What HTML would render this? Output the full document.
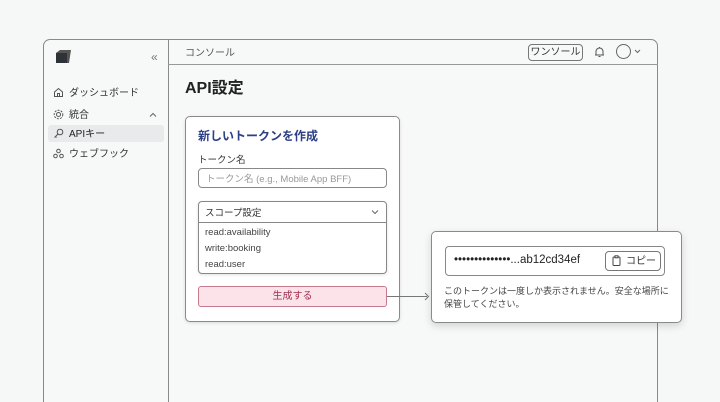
<!DOCTYPE html>
<html style="width:720px;height:402px;overflow:hidden"><head><meta charset="utf-8"><style>
*{box-sizing:border-box;margin:0;padding:0}
body{width:720px;height:402px;background:#f6f7f7;font-family:"Liberation Sans","Noto Sans CJK JP",sans-serif;color:#333;position:relative;overflow:hidden}
.a{position:absolute;line-height:1}
.frame{left:43px;top:39px;width:615px;height:363px;border:1px solid #8a8a8a;border-bottom:none;border-radius:7px 7px 0 0;background:#f7f8f8}
.sb{left:168px;top:39px;width:1px;height:363px;background:#8a8a8a}
.hd{left:168px;top:64px;width:490px;height:1px;background:#999}
.nav{font-size:10px;color:#333}
.card{left:185px;top:116px;width:215px;height:206px;border:1px solid #8a8a8a;border-radius:5px;background:#fff;box-shadow:0 1px 3px rgba(0,0,0,.12)}
.pop{left:431px;top:231px;width:251px;height:92px;border:1px solid #8a8a8a;border-radius:5px;background:#fff;box-shadow:0 3px 8px rgba(0,0,0,.15)}
</style></head><body>
<div class="a frame"></div>
<div class="a sb"></div>
<div class="a hd"></div>
<svg class="a" style="left:54px;top:49px" width="18" height="16" viewBox="0 0 18 16"><path d="M2 4 L6 1 L17 1 L15 14 L2 14 Z" fill="#555"/><path d="M2 4 L13 4 L13 14 L2 14Z" fill="#2e3338"/></svg>
<div class="a" style="left:151px;top:51px;font-size:12px;color:#777">«</div>
<svg class="a" style="left:53px;top:87px" width="11" height="11" viewBox="0 0 11 11" fill="none" stroke="#555" stroke-width="1"><path d="M1.5 5 L5.5 1.5 L9.5 5 V9.5 H1.5Z M4.5 9.5 V6.5 H6.5 V9.5"/></svg>
<div class="a nav" style="left:69px;top:89px">ダッシュボード</div>
<svg class="a" style="left:53px;top:109px" width="11" height="11" viewBox="0 0 11 11" fill="none" stroke="#555" stroke-width="1"><circle cx="5.5" cy="5.5" r="2"/><circle cx="5.5" cy="5.5" r="4.3" stroke-dasharray="2 1.2"/></svg>
<div class="a nav" style="left:69px;top:111px">統合</div>
<svg class="a" style="left:149px;top:112px" width="8" height="6" viewBox="0 0 8 6" fill="none" stroke="#666"><path d="M1 4.5 L4 1.5 L7 4.5"/></svg>
<div class="a" style="left:48px;top:125px;width:116px;height:17px;background:#e9eaeb;border-radius:3px"></div>
<svg class="a" style="left:53px;top:128px" width="11" height="11" viewBox="0 0 11 11" fill="none" stroke="#555" stroke-width="1"><circle cx="7" cy="4" r="2.8"/><path d="M5 6 L1.5 9.5 M2.5 8.5 L3.5 9.5"/></svg>
<div class="a nav" style="left:69px;top:130px;color:#222">APIキー</div>
<svg class="a" style="left:53px;top:148px" width="11" height="11" viewBox="0 0 11 11" fill="none" stroke="#555" stroke-width="1"><circle cx="5.5" cy="3" r="1.8"/><circle cx="2.5" cy="8" r="1.8"/><circle cx="8.5" cy="8" r="1.8"/></svg>
<div class="a nav" style="left:69px;top:150px">ウェブフック</div>
<div class="a" style="left:185px;top:49px;font-size:10px;color:#555">コンソール</div>
<div class="a" style="left:528px;top:44px;width:55px;height:17px;border:1px solid #777;border-radius:4px;font-size:10px;padding-top:3px;text-align:center;color:#333">ワンソール</div>
<svg class="a" style="left:594px;top:46px" width="11" height="12" viewBox="0 0 11 12" fill="none" stroke="#555" stroke-width="1"><path d="M2 9 V5.5 A3.5 3.5 0 0 1 9 5.5 V9 Z M1 9 H10 M5.5 1 V2 M4.5 10.5 H6.5"/></svg>
<div class="a" style="left:616px;top:44px;width:15px;height:15px;border:1px solid #666;border-radius:50%"></div>
<svg class="a" style="left:634px;top:49px" width="7" height="5" viewBox="0 0 7 5" fill="none" stroke="#666"><path d="M1 1 L3.5 3.5 L6 1"/></svg>
<div class="a" style="left:185px;top:81px;font-size:16px;font-weight:bold;color:#222">API設定</div>
<div class="a card"></div>
<div class="a" style="left:198px;top:130px;font-size:12px;font-weight:bold;color:#2d3f85">新しいトークンを作成</div>
<div class="a" style="left:198px;top:156px;font-size:9.5px;color:#333">トークン名</div>
<div class="a" style="left:198px;top:168px;width:189px;height:20px;border:1px solid #888;border-radius:4px;font-size:9.5px;padding:6px 0 0 7px;color:#999;background:#fff">トークン名 (e.g., Mobile App BFF)</div>
<div class="a" style="left:198px;top:201px;width:189px;height:73px;border:1px solid #888;border-radius:4px;background:#fff;box-shadow:0 1px 3px rgba(0,0,0,.12)"></div>
<div class="a" style="left:198px;top:222px;width:189px;height:1px;background:#888"></div>
<div class="a" style="left:205px;top:209px;font-size:9.5px;color:#333">スコープ設定</div>
<svg class="a" style="left:371px;top:209px" width="8" height="6" viewBox="0 0 8 6" fill="none" stroke="#666"><path d="M1 1.5 L4 4.5 L7 1.5"/></svg>
<div class="a" style="left:205px;top:228px;font-size:9.5px;color:#444">read:availability</div>
<div class="a" style="left:205px;top:244px;font-size:9.5px;color:#444">write:booking</div>
<div class="a" style="left:205px;top:260px;font-size:9.5px;color:#444">read:user</div>
<div class="a" style="left:198px;top:286px;width:189px;height:21px;border:1px solid #c77a8e;border-radius:3px;background:#fbe3e9;font-size:10px;padding-top:5px;text-align:center;color:#a4304f">生成する</div>
<div class="a" style="left:387px;top:296px;width:40px;height:1px;background:#777"></div>
<svg class="a" style="left:424px;top:292px" width="6" height="9" viewBox="0 0 6 9" fill="none" stroke="#777"><path d="M1 1 L4.5 4.5 L1 8"/></svg>
<div class="a pop"></div>
<div class="a" style="left:445px;top:246px;width:220px;height:30px;border:1px solid #888;border-radius:4px;background:#fff"></div>
<div class="a" style="left:454px;top:255px;font-size:11.5px;color:#222">••••••••••••••...ab12cd34ef</div>
<div class="a" style="left:605px;top:251px;width:56px;height:20px;border:1px solid #777;border-radius:4px;background:#fff"></div>
<svg class="a" style="left:612px;top:255px" width="9" height="11" viewBox="0 0 9 11" fill="none" stroke="#444" stroke-width="1"><rect x="1" y="2" width="7" height="8.5" rx="1"/><rect x="3" y="0.8" width="3" height="2" fill="#fff"/></svg>
<div class="a" style="left:626px;top:257px;font-size:10px;color:#333">コピー</div>
<div class="a" style="left:444px;top:285px;width:232px;font-size:9px;line-height:13px;color:#444">このトークンは一度しか表示されません。安全な場所に保管してください。</div>
</body></html>
